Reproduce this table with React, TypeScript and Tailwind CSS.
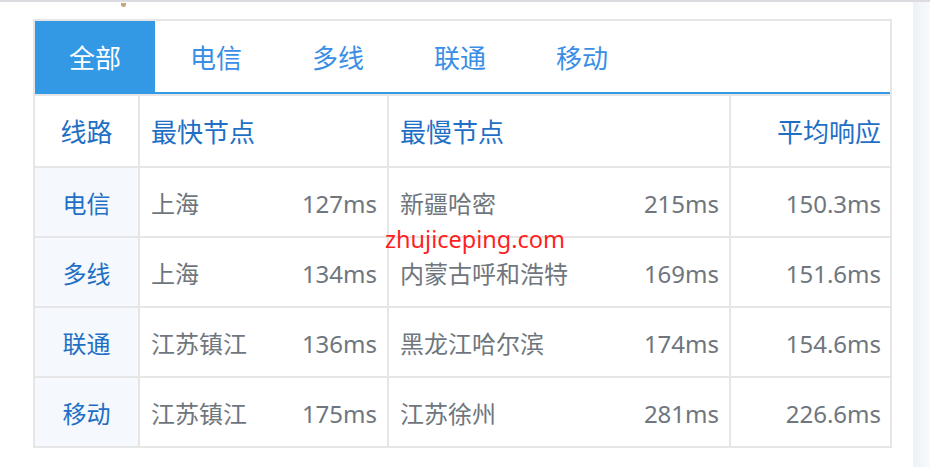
import React from "react";

const font = { fontFamily: '"Noto Sans", "Noto Sans CJK SC", sans-serif' };

const rows = [
  { k: "电信", a: "上海", am: "127ms", b: "新疆哈密", bm: "215ms", avg: "150.3ms" },
  { k: "多线", a: "上海", am: "134ms", b: "内蒙古呼和浩特", bm: "169ms", avg: "151.6ms" },
  { k: "联通", a: "江苏镇江", am: "136ms", b: "黑龙江哈尔滨", bm: "174ms", avg: "154.6ms" },
  { k: "移动", a: "江苏镇江", am: "175ms", b: "江苏徐州", bm: "281ms", avg: "226.6ms" },
];

export default function App() {
  return (
    <div className="relative w-[930px] h-[467px] bg-white border-t-2 border-[#dcdce0] flex overflow-hidden" style={font}>
      <span className="absolute left-[121px] top-[1px] w-[5px] h-[4px] rounded-b-full bg-[#c9a57a]" />
      <div className="flex-1 pl-[33px] pt-[17px]">
        <div className="relative w-[859px] border-2 border-[#e6e6e6]">
          <div className="flex h-[73px] border-b-2 border-[#3399e5] text-[26px] leading-none">
            <div className="w-[120px] bg-[#3399e5] text-white flex items-center justify-center pt-[2px]">全部</div>
            {["电信", "多线", "联通", "移动"].map((t) => (
              <div key={t} className="w-[122px] text-[#3a8ee6] flex items-center justify-center pt-[2px]">
                {t}
              </div>
            ))}
          </div>
          <div className="flex h-[72px] border-t-2 border-[#e6e6e6] text-[26px] text-[#1f6fc5]">
            <div className="w-[105px] border-r-2 border-[#e6e6e6] flex items-center justify-center pt-[3px]">线路</div>
            <div className="w-[249px] border-r-2 border-[#e6e6e6] flex items-center pl-[11px] pt-[3px]">最快节点</div>
            <div className="w-[342px] border-r-2 border-[#e6e6e6] flex items-center pl-[11px] pt-[3px]">最慢节点</div>
            <div className="flex-1 flex items-center justify-end pr-[9px] pt-[3px]">平均响应</div>
          </div>
          {rows.map((r) => (
            <div key={r.k} className="flex h-[70px] border-t-2 border-[#e6e6e6] text-[24px] text-[#6f767d]">
              <div className="w-[105px] border-r-2 border-[#e6e6e6] bg-[#f5f9fd] text-[#1f6fc5] flex items-center justify-center pt-[3px]">
                {r.k}
              </div>
              <div className="w-[249px] border-r-2 border-[#e6e6e6] flex items-center justify-between pl-[11px] pr-[10px] pt-[3px]">
                <span>{r.a}</span>
                <span>{r.am}</span>
              </div>
              <div className="w-[342px] border-r-2 border-[#e6e6e6] flex items-center justify-between pl-[11px] pr-[10px] pt-[3px]">
                <span>{r.b}</span>
                <span>{r.bm}</span>
              </div>
              <div className="flex-1 flex items-center justify-end pr-[9px] pt-[3px]">{r.avg}</div>
            </div>
          ))}
          <div className="absolute left-[350px] top-[207px] text-[23.5px] leading-none text-[#ff1f1f] whitespace-nowrap">
            zhujiceping.com
          </div>
        </div>
      </div>
      <div className="w-[17px] h-full bg-gradient-to-r from-[#edf2f8] to-[#f8fafc]" />
    </div>
  );
}
